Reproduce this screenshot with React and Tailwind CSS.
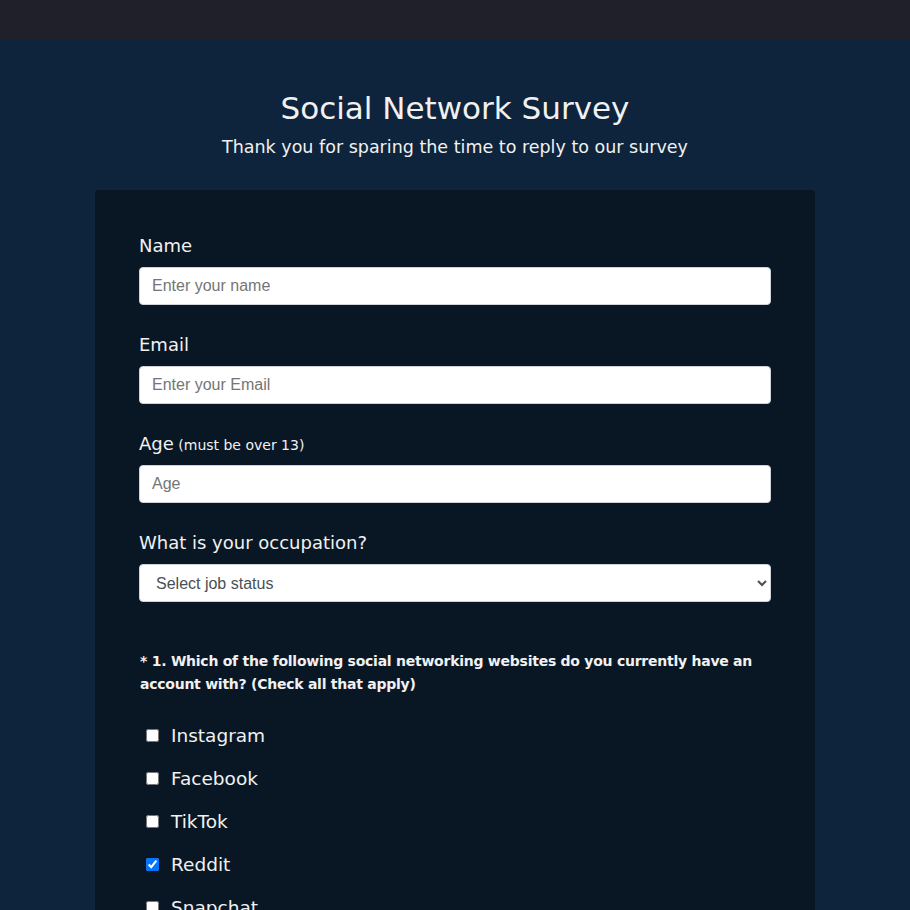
import React, { useState } from 'react';

const fieldFont = { fontFamily: '"Liberation Sans", Arial, sans-serif' };

const Field = ({ label, note, placeholder, type = 'text' }) => (
  <div className="mb-7">
    <label className="block h-6 mb-[9px] text-[18px] leading-6 text-[#f1f1f1]">
      {label}
      {note && <span className="text-[14px]"> {note}</span>}
    </label>
    <input
      type={type}
      placeholder={placeholder}
      style={fieldFont}
      className="block w-full h-[38px] px-3 rounded-[4px] border border-[#ced4da] bg-white text-[16px] text-[#495057] placeholder:text-[#757575] outline-none"
    />
  </div>
);

const sites = ['Instagram', 'Facebook', 'TikTok', 'Reddit', 'Snapchat'];

export default function App() {
  const [checked, setChecked] = useState({ Reddit: true });

  return (
    <div
      className="min-h-[910px] bg-[#0e243c] text-[#f1f1f1]"
      style={{ fontFamily: '"DejaVu Sans", "Noto Sans", sans-serif' }}
    >
      <div className="h-10 bg-[#1f2029]" />

      <div className="pt-12 text-center">
        <h1 className="text-[31px] leading-10 font-normal">Social Network Survey</h1>
        <p className="mt-[6px] text-[17.5px] leading-[27px]">
          Thank you for sparing the time to reply to our survey
        </p>
      </div>

      <form className="mx-auto mt-[29px] w-[720px] rounded-[4px] bg-[#091725] px-11 pt-11 pb-10">
        <Field label="Name" placeholder="Enter your name" />
        <Field label="Email" placeholder="Enter your Email" type="email" />
        <Field label="Age" note="(must be over 13)" placeholder="Age" type="number" />

        <div className="mb-7">
          <label className="block h-6 mb-[9px] text-[18px] leading-6">
            What is your occupation?
          </label>
          <select
            style={fieldFont}
            defaultValue=""
            className="block w-full h-[38px] pl-3 pr-2 rounded-[4px] border border-[#ced4da] bg-white text-[16px] text-[#495057] outline-none"
          >
            <option value="" disabled>
              Select job status
            </option>
            <option>Student</option>
            <option>Full Time Job</option>
            <option>Part Time Job</option>
            <option>Unemployed</option>
          </select>
        </div>

        <p className="pt-5 pl-px text-[14px] leading-[23px] font-bold tracking-[-0.25px]">
          * 1. Which of the following social networking websites do you currently have an account with? (Check all that apply)
        </p>

        <div className="mt-[18px]">
          {sites.map((s) => (
            <label key={s} className="flex items-center h-[43px] text-[18.5px]">
              <input
                type="checkbox"
                checked={!!checked[s]}
                onChange={() => setChecked({ ...checked, [s]: !checked[s] })}
                className="ml-[7px] mr-3 w-[13px] h-[13px]"
              />
              {s}
            </label>
          ))}
        </div>
      </form>
    </div>
  );
}
